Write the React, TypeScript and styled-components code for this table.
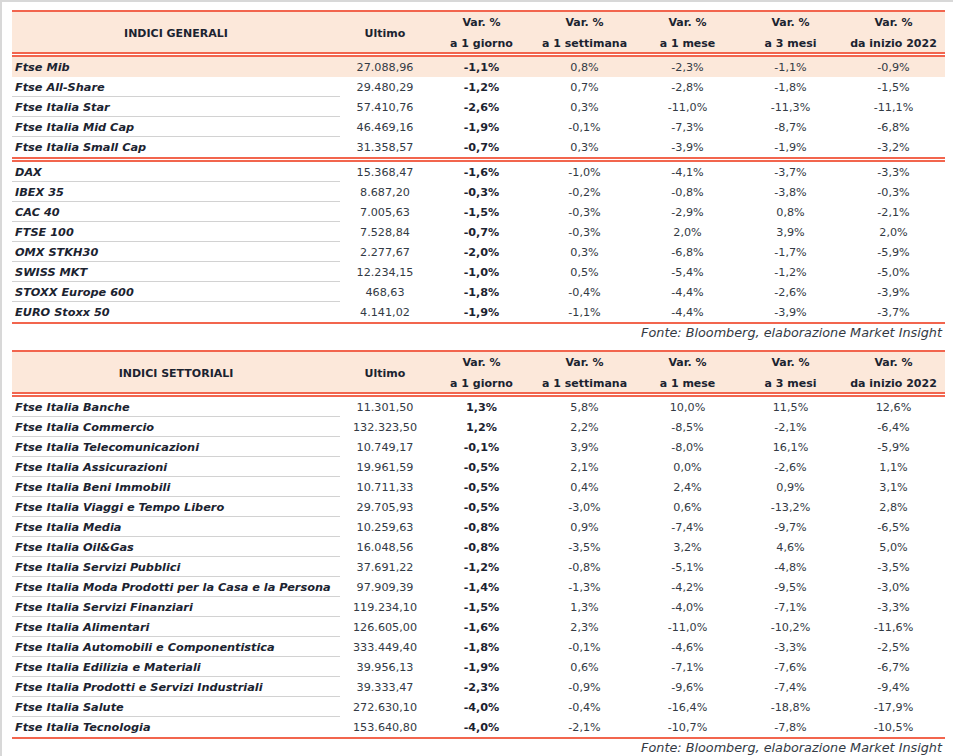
import React from 'react';
import styled, { createGlobalStyle } from 'styled-components';

const GlobalStyle = createGlobalStyle`
body {
  margin: 0;
  background: #ffffff;
  font-family: "DejaVu Sans", "Liberation Sans", sans-serif;
  color: #1b2330;
}
`;

const RED = '#f2654e';
const PEACH = '#fce8da';

const Page = styled.div`
  box-sizing: border-box;
  min-height: 756px;
  width: 953px;
  border-top: 2px solid #d8d8d8;
  border-left: 2px solid #d8d8d8;
  padding: 8px 0 0 10px;
`;

const Table = styled.div`
  width: 933px;
  border-top: 2px solid ${RED};
  border-bottom: 2px solid ${RED};
`;

const cols = '328px 90px repeat(5, 103px)';

const HeaderRow = styled.div`
  display: grid;
  grid-template-columns: ${cols};
  height: 40px;
  background: ${PEACH};
  font-weight: bold;
  font-size: 11px;
  color: #1b2330;
`;

const HeadCell = styled.div`
  display: flex;
  flex-direction: column;
  align-items: center;
  justify-content: center;
  text-align: center;
  line-height: 21px;
  white-space: nowrap;
`;

const Group = styled.div`
  border-top: 5px double ${RED};
`;

const Row = styled.div<{ $hl?: boolean }>`
  display: grid;
  grid-template-columns: ${cols};
  height: 20px;
  background: ${(p) => (p.$hl ? PEACH : 'transparent')};
`;

const NameCell = styled.div<{ $line?: boolean }>`
  box-sizing: border-box;
  padding: 1px 0 0 3px;
  display: flex;
  align-items: center;
  font-weight: bold;
  font-style: italic;
  font-size: 11.3px;
  white-space: nowrap;
  border-bottom: 1px solid ${(p) => (p.$line ? '#d2d2d2' : 'transparent')};
`;

const NumCell = styled.div<{ $bold?: boolean }>`
  display: flex;
  align-items: center;
  justify-content: center;
  font-size: 11.2px;
  font-weight: ${(p) => (p.$bold ? 'bold' : 'normal')};
  color: ${(p) => (p.$bold ? '#1b2330' : '#333a44')};
  white-space: nowrap;
`;

const Source = styled.div`
  width: 930px;
  height: 17px;
  margin-bottom: 9px;
  display: flex;
  align-items: center;
  justify-content: flex-end;
  font-style: italic;
  font-size: 12.8px;
  color: #333a44;
`;

type Rec = [string, string, string, string, string, string, string];

const general: Rec[][] = [
  [
    ['Ftse Mib', '27.088,96', '-1,1%', '0,8%', '-2,3%', '-1,1%', '-0,9%'],
    ['Ftse All-Share', '29.480,29', '-1,2%', '0,7%', '-2,8%', '-1,8%', '-1,5%'],
    ['Ftse Italia Star', '57.410,76', '-2,6%', '0,3%', '-11,0%', '-11,3%', '-11,1%'],
    ['Ftse Italia Mid Cap', '46.469,16', '-1,9%', '-0,1%', '-7,3%', '-8,7%', '-6,8%'],
    ['Ftse Italia Small Cap', '31.358,57', '-0,7%', '0,3%', '-3,9%', '-1,9%', '-3,2%'],
  ],
  [
    ['DAX', '15.368,47', '-1,6%', '-1,0%', '-4,1%', '-3,7%', '-3,3%'],
    ['IBEX 35', '8.687,20', '-0,3%', '-0,2%', '-0,8%', '-3,8%', '-0,3%'],
    ['CAC 40', '7.005,63', '-1,5%', '-0,3%', '-2,9%', '0,8%', '-2,1%'],
    ['FTSE 100', '7.528,84', '-0,7%', '-0,3%', '2,0%', '3,9%', '2,0%'],
    ['OMX STKH30', '2.277,67', '-2,0%', '0,3%', '-6,8%', '-1,7%', '-5,9%'],
    ['SWISS MKT', '12.234,15', '-1,0%', '0,5%', '-5,4%', '-1,2%', '-5,0%'],
    ['STOXX Europe 600', '468,63', '-1,8%', '-0,4%', '-4,4%', '-2,6%', '-3,9%'],
    ['EURO Stoxx 50', '4.141,02', '-1,9%', '-1,1%', '-4,4%', '-3,9%', '-3,7%'],
  ],
];

const sectors: Rec[][] = [
  [
    ['Ftse Italia Banche', '11.301,50', '1,3%', '5,8%', '10,0%', '11,5%', '12,6%'],
    ['Ftse Italia Commercio', '132.323,50', '1,2%', '2,2%', '-8,5%', '-2,1%', '-6,4%'],
    ['Ftse Italia Telecomunicazioni', '10.749,17', '-0,1%', '3,9%', '-8,0%', '16,1%', '-5,9%'],
    ['Ftse Italia Assicurazioni', '19.961,59', '-0,5%', '2,1%', '0,0%', '-2,6%', '1,1%'],
    ['Ftse Italia Beni Immobili', '10.711,33', '-0,5%', '0,4%', '2,4%', '0,9%', '3,1%'],
    ['Ftse Italia Viaggi e Tempo Libero', '29.705,93', '-0,5%', '-3,0%', '0,6%', '-13,2%', '2,8%'],
    ['Ftse Italia Media', '10.259,63', '-0,8%', '0,9%', '-7,4%', '-9,7%', '-6,5%'],
    ['Ftse Italia Oil&Gas', '16.048,56', '-0,8%', '-3,5%', '3,2%', '4,6%', '5,0%'],
    ['Ftse Italia Servizi Pubblici', '37.691,22', '-1,2%', '-0,8%', '-5,1%', '-4,8%', '-3,5%'],
    ['Ftse Italia Moda Prodotti per la Casa e la Persona', '97.909,39', '-1,4%', '-1,3%', '-4,2%', '-9,5%', '-3,0%'],
    ['Ftse Italia Servizi Finanziari', '119.234,10', '-1,5%', '1,3%', '-4,0%', '-7,1%', '-3,3%'],
    ['Ftse Italia Alimentari', '126.605,00', '-1,6%', '2,3%', '-11,0%', '-10,2%', '-11,6%'],
    ['Ftse Italia Automobili e Componentistica', '333.449,40', '-1,8%', '-0,1%', '-4,6%', '-3,3%', '-2,5%'],
    ['Ftse Italia Edilizia e Materiali', '39.956,13', '-1,9%', '0,6%', '-7,1%', '-7,6%', '-6,7%'],
    ['Ftse Italia Prodotti e Servizi Industriali', '39.333,47', '-2,3%', '-0,9%', '-9,6%', '-7,4%', '-9,4%'],
    ['Ftse Italia Salute', '272.630,10', '-4,0%', '-0,4%', '-16,4%', '-18,8%', '-17,9%'],
    ['Ftse Italia Tecnologia', '153.640,80', '-4,0%', '-2,1%', '-10,7%', '-7,8%', '-10,5%'],
  ],
];

const periods = ['a 1 giorno', 'a 1 settimana', 'a 1 mese', 'a 3 mesi', 'da inizio 2022'];

const IndexTable = (props: { title: string; groups: Rec[][]; highlight?: string }) => {
  const { title, groups, highlight } = props;
  return (
    <Table>
      <HeaderRow>
        <HeadCell>{title}</HeadCell>
        <HeadCell>Ultimo</HeadCell>
        {periods.map((p) => (
          <HeadCell key={p}>
            <span>Var. %</span>
            <span>{p}</span>
          </HeadCell>
        ))}
      </HeaderRow>
      {groups.map((g, gi) => (
        <Group key={gi}>
          {g.map((r, ri) => {
            const hl = r[0] === highlight;
            return (
              <Row key={r[0]} $hl={hl}>
                <NameCell $line={!hl && ri < g.length - 1}>{r[0]}</NameCell>
                <NumCell>{r[1]}</NumCell>
                <NumCell $bold>{r[2]}</NumCell>
                <NumCell>{r[3]}</NumCell>
                <NumCell>{r[4]}</NumCell>
                <NumCell>{r[5]}</NumCell>
                <NumCell>{r[6]}</NumCell>
              </Row>
            );
          })}
        </Group>
      ))}
    </Table>
  );
};

const App = () => (
  <Page>
    <GlobalStyle />
    <IndexTable title="INDICI GENERALI" groups={general} highlight="Ftse Mib" />
    <Source>Fonte: Bloomberg, elaborazione Market Insight</Source>
    <IndexTable title="INDICI SETTORIALI" groups={sectors} />
    <Source>Fonte: Bloomberg, elaborazione Market Insight</Source>
  </Page>
);

export default App;
